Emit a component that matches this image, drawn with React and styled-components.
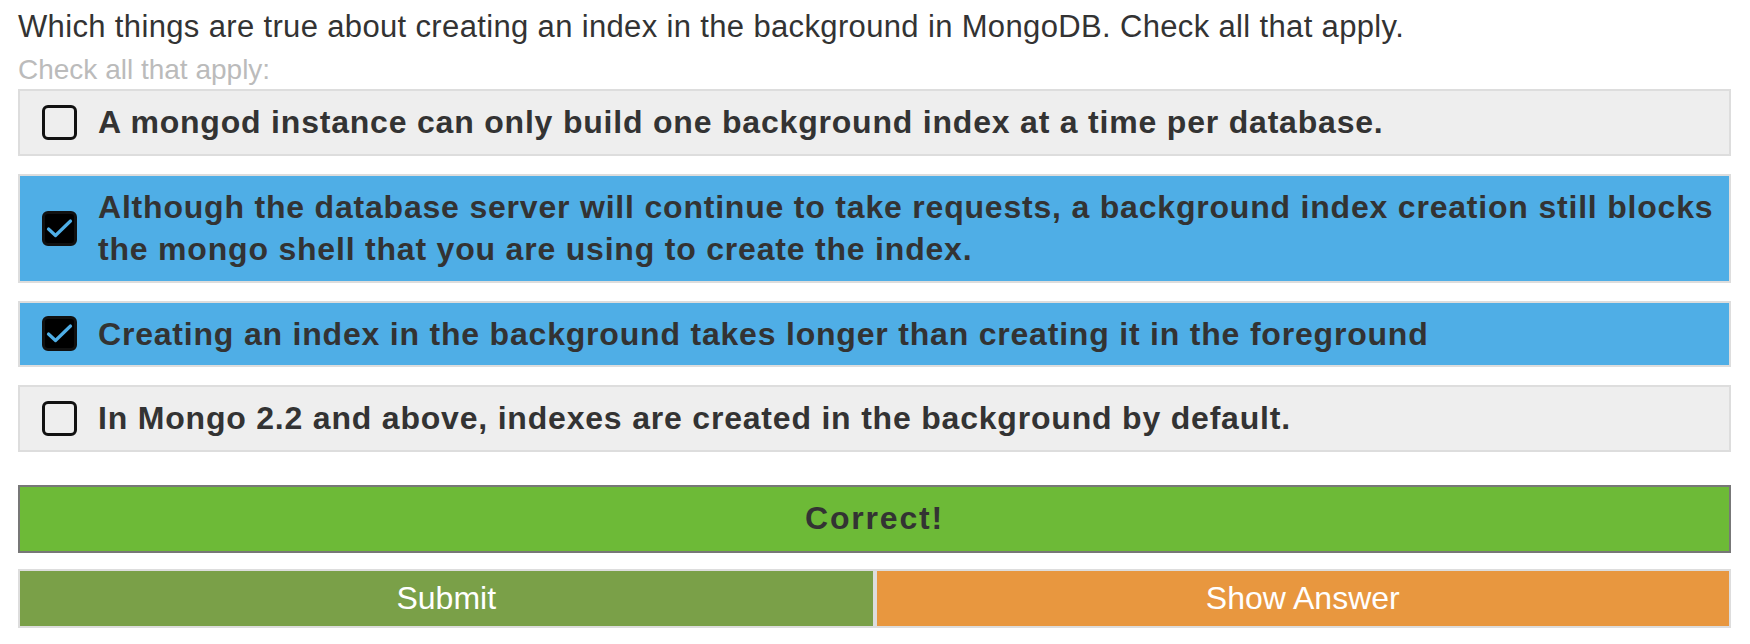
import styled, { createGlobalStyle } from "styled-components"

const Global = createGlobalStyle`
    body {
        margin: 0;
        background: #fff;
        font-family: "Liberation Sans", Arial, sans-serif;
        color: #333;
    }
`

const Quiz = styled.section`
    padding: 8px 19px 0 18px;
`

const Pregunta = styled.p`
    margin: 0;
    font-size: 31px;
    line-height: 38px;
    letter-spacing: 0.35px;
    font-weight: 400;
    color: #333;
`

const Ayuda = styled.p`
    margin: 7px 0 2px;
    font-size: 28px;
    line-height: 34px;
    color: #bbb;
`

const Opciones = styled.div`
    display: flex;
    flex-direction: column;
    gap: 18px;
`

const Opcion = styled.label`
    display: flex;
    align-items: center;
    gap: 21px;
    padding: 10px 4px 10px 22px;
    border: 2px solid #ddd;
    background: ${({ $marcada }) => ($marcada ? "#4faee6" : "#eee")};
    font-size: 32px;
    line-height: 42.5px;
    font-weight: 700;
    letter-spacing: 0.8px;
    color: #333;
`

const Caja = styled.span`
    flex: none;
    width: 35px;
    height: 35px;
    box-sizing: border-box;
    border: 3px solid #111;
    border-radius: 6px;
    background: ${({ $marcada }) => ($marcada ? "#000" : "transparent")};
    display: flex;
    align-items: center;
    justify-content: center;
`

const Resultado = styled.div`
    margin-top: 33px;
    height: 68px;
    box-sizing: border-box;
    border: 2px solid #777;
    background: #6dba37;
    display: flex;
    align-items: center;
    justify-content: center;
    font-size: 32px;
    font-weight: 700;
    letter-spacing: 1.8px;
    color: #333;
`

const Botones = styled.div`
    margin-top: 16px;
    display: grid;
    grid-template-columns: 1fr 1fr;
`

const Boton = styled.button`
    height: 59px;
    border: 2px solid #ddd;
    background: ${({ $color }) => $color};
    color: #fff;
    font-family: "Liberation Sans", Arial, sans-serif;
    font-size: 32px;
    padding: 0;
`

const Check = () => (
    <svg width="27" height="21" viewBox="0 0 27 21">
        <path d="M2.5 11 L9.5 17.5 L24.5 3" fill="none" stroke="#4faee6" strokeWidth="3.2" strokeLinecap="round" strokeLinejoin="round" />
    </svg>
)

const opciones = [
    { id: 1, texto: "A mongod instance can only build one background index at a time per database.", marcada: false },
    { id: 2, texto: "Although the database server will continue to take requests, a background index creation still blocks the mongo shell that you are using to create the index.", marcada: true },
    { id: 3, texto: "Creating an index in the background takes longer than creating it in the foreground", marcada: true },
    { id: 4, texto: "In Mongo 2.2 and above, indexes are created in the background by default.", marcada: false },
]

const App = () => {
    return <>
        <Global />
        <Quiz>
            <Pregunta>Which things are true about creating an index in the background in MongoDB. Check all that apply.</Pregunta>
            <Ayuda>Check all that apply:</Ayuda>
            <Opciones>
                {
                    opciones.map(op => {
                        return <Opcion key={op.id} $marcada={op.marcada}>
                            <Caja $marcada={op.marcada}>{op.marcada && <Check />}</Caja>
                            <span>{op.texto}</span>
                        </Opcion>
                    })
                }
            </Opciones>
            <Resultado>Correct!</Resultado>
            <Botones>
                <Boton $color="#7aa048">Submit</Boton>
                <Boton $color="#e8973f">Show Answer</Boton>
            </Botones>
        </Quiz>
    </>
}

export default App
